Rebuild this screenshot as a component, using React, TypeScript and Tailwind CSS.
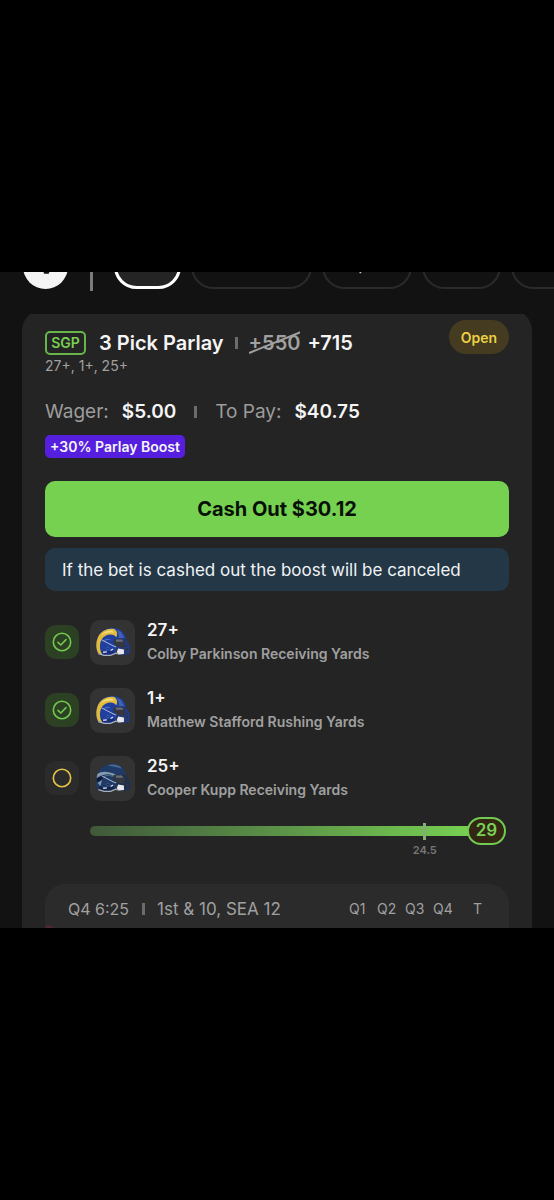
import React from "react";

type Palette = {
  shell: string;
  shade: string;
  stripe: string;
  glow: string;
  mask: string;
};

const RAMS: Palette = { shell: "#203f9f", shade: "#182e78", stripe: "#e3bb3c", glow: "#4870c6", mask: "#213a8c" };
const SEAHAWKS: Palette = { shell: "#1f3a66", shade: "#15264a", stripe: "#8598ae", glow: "#4a6a96", mask: "#1a2f56" };

type Leg = { line: string; market: string; won: boolean; team: "rams" | "seahawks" };

const LEGS: Leg[] = [
  { line: "27+", market: "Colby Parkinson Receiving Yards", won: true, team: "rams" },
  { line: "1+", market: "Matthew Stafford Rushing Yards", won: true, team: "rams" },
  { line: "25+", market: "Cooper Kupp Receiving Yards", won: false, team: "seahawks" },
];

function Helmet({ team }: { team: Leg["team"] }) {
  const c = team === "rams" ? RAMS : SEAHAWKS;
  return (
    <svg viewBox="0 0 104 88" className="h-[30px] w-[36px]" aria-hidden="true">
      <path d="M8 78C0 64 0 38 13 20C27 1 58-2 75 10C85 17 89 26 90 36L65 35L58 45L63 62L60 77L43 84L22 82Z" fill={c.shell} />
      <path d="M13 66C20 76 39 72 52 67L60 77L43 84L26 82L8 77Z" fill={c.shade} />
      {team === "rams" ? (
        <>
          <path d="M56 6C36 2 19 11 10 26C1 42 1 64 9 78L21 80C13 69 11 52 18 38C25 25 41 19 55 24L62 30C66 21 64 11 56 6Z" fill={c.stripe} />
          <path d="M51 11C36 8 24 15 17 25C28 17 41 14 55 17Z" fill="#f3dc80" />
          <path d="M61 8L75 14L85 32L69 32C70 23 67 14 61 8Z" fill="#4062b3" />
        </>
      ) : (
        <>
          <path d="M6 32C19 23 37 24 60 33L54 37C36 31 21 33 4 44Z" fill={c.stripe} />
          <path d="M4 47C20 34 35 36 49 45L30 44L5 56Z" fill="#0d1930" />
          <path d="M37 7C52 2 70 5 79 17L61 12Z" fill={c.glow} />
          <path d="M43 38L52 36L49 42Z" fill="#8abf48" />
          <path d="M7 59L20 50L15 68Z" fill={c.stripe} />
        </>
      )}
      <ellipse cx="36" cy="50" rx="16" ry="17" fill={c.shell} />
      <path d="M23 43C27 33 39 32 46 39C38 37 30 38 23 43Z" fill={c.glow} />
      <circle cx="37" cy="63" r="4" fill={c.shade} stroke={c.glow} strokeWidth="2" />
      <path d="M55 36L81 34L88 48L81 60L62 58L53 47Z" fill="#34373f" />
      <path d="M60 37L79 37L82 43L61 43Z" fill="#686c77" />
      <path d="M19 38L52 55L64 60" fill="none" stroke="#c5cee2" strokeWidth="2.5" />
      <path d="M61 59C75 65 89 62 101 56M64 68L100 72M79 36C94 39 103 57 98 77L72 80M90 42L88 78" fill="none" stroke={c.mask} strokeWidth="4.5" strokeLinejoin="round" />
      <path d="M67 63L84 66L84 79L69 81L63 74Z" fill="#e7e7ec" />
      <path d="M9 78L26 83L45 83L60 77L69 80" fill="none" stroke="#a9b0c2" strokeWidth="3.5" />
      <path d="M23 74L34 73M45 69L52 65" stroke="#d6deee" strokeWidth="4" />
    </svg>
  );
}

function Status({ won }: { won: boolean }) {
  return (
    <div className={`flex size-[34px] shrink-0 items-center justify-center rounded-[11px] ${won ? "bg-[#2c4023]" : "bg-[#2b2b2b]"}`}>
      <svg viewBox="0 0 20 20" className="size-5" fill="none" role="img" aria-label={won ? "Won" : "In progress"}>
        <circle cx="10" cy="10" r="8.7" stroke={won ? "#73c850" : "#e5c644"} strokeWidth="1.6" />
        {won && <path d="M6 10.4L8.8 13L14 7.6" stroke="#73c850" strokeWidth="1.6" strokeLinecap="round" strokeLinejoin="round" />}
      </svg>
    </div>
  );
}

function Divider() {
  return <span className="h-3 w-[3px] shrink-0 bg-[#6c6c6c]" />;
}

const chip = "h-[45px] shrink-0 rounded-full border-2 border-[#2a2a2a] px-5 pb-1 text-[#d0d0d0]";

export default function App() {
  return (
    <div className="min-h-screen bg-black py-[272px] font-['Inter',sans-serif] text-[#f5f5f5]">
      <main className="overflow-hidden bg-[#121212]">
        <nav className="flex h-[42px] items-start overflow-hidden pl-[23px] text-[17px]">
          <div className="-mt-7 flex items-start">
            <button aria-label="Filter" className="flex size-[45px] shrink-0 items-center justify-center rounded-full bg-[#f4f4f4]">
              <svg viewBox="0 0 24 24" className="size-5" fill="none" stroke="#121212" strokeWidth="2" strokeLinecap="round">
                <path d="M3 5h18M6 12h12M10 19h5" />
              </svg>
            </button>
            <span className="mr-[21px] ml-[22px] h-[47px] w-[3px] shrink-0 bg-[#7b7b7b]" />
            <div className="flex gap-[10px]">
              <button className="h-[45px] w-[67px] shrink-0 rounded-full border-[3px] border-white bg-[#242424] pb-1">All</button>
              <button className={`${chip} w-[121px]`}>Cash Out</button>
              <button className={`${chip} w-[90px]`}>Open</button>
              <button className={`${chip} w-[79px]`}>Live</button>
              <button className={`${chip} w-[110px]`}>Settled</button>
            </div>
          </div>
        </nav>

        <div className="overflow-hidden px-[22px]">
          <section className="-mt-[5px] rounded-t-[22px] bg-[#242424] px-[23px] pt-[11px]">
            <header className="flex items-start">
              <div className="flex h-[34px] grow items-center pt-[11px]">
                <span className="flex h-6 w-[41px] items-center justify-center rounded-[5px] border-2 border-[#68b64a] text-[14px] font-semibold text-[#78d152]">SGP</span>
                <h1 className="ml-[13px] text-[20px] leading-6 font-semibold">3 Pick Parlay</h1>
                <span className="mx-[11px] flex"><Divider /></span>
                <s className="relative text-[20px] leading-6 font-semibold text-[#a0a0a0] no-underline">
                  +550
                  <svg viewBox="0 0 50 24" preserveAspectRatio="none" className="absolute inset-0 size-full" aria-hidden="true">
                    <path d="M0 22L50 1" stroke="#a0a0a0" strokeWidth="2" />
                  </svg>
                </s>
                <span className="ml-[7px] text-[20px] leading-6 font-semibold">+715</span>
              </div>
              <span className="flex h-[34px] w-[60px] items-center justify-center rounded-full bg-[#443b20] text-[14px] font-semibold text-[#ecd044]">Open</span>
            </header>
            <p className="mt-1 text-[14px] leading-4 text-[#a0a0a0]">27+, 1+, 25+</p>

            <div className="mt-[26px] flex items-center text-[19px] leading-6">
              <span className="text-[#9c9c9c]">Wager:</span>
              <span className="ml-[13px] font-semibold">$5.00</span>
              <span className="mx-[18px] flex"><Divider /></span>
              <span className="text-[#9c9c9c]">To Pay:</span>
              <span className="ml-[13px] font-semibold">$40.75</span>
            </div>
            <div className="mt-[11px] flex">
              <span className="flex h-[23px] items-center rounded-[5px] bg-[#561fe0] px-[5px] text-[14px] font-semibold">+30% Parlay Boost</span>
            </div>

            <button className="mt-[23px] flex h-14 w-full items-center justify-center rounded-[10px] bg-[#77d151] text-[20px] font-bold text-[#071006]">
              Cash Out $30.12
            </button>
            <p className="mt-[11px] flex min-h-[43px] items-center rounded-[10px] bg-[#243746] px-[17px] pt-[2px] text-[17px] text-[#f0f3f5]">
              If the bet is cashed out the boost will be canceled
            </p>

            <ul className="mt-7 flex flex-col gap-[22px]">
              {LEGS.map((leg) => (
                <li key={leg.market} className="flex h-[46px] items-center">
                  <Status won={leg.won} />
                  <div className="ml-[11px] flex size-[45px] shrink-0 items-center justify-center rounded-[10px] bg-[#333333]">
                    <Helmet team={leg.team} />
                  </div>
                  <div className="ml-3">
                    <h2 className="text-[17px] leading-6 font-semibold">{leg.line}</h2>
                    <p className="text-[14px] leading-6 font-semibold text-[#a0a0a0]">{leg.market}</p>
                  </div>
                </li>
              ))}
            </ul>

            <div className="mt-4 mr-[3px] ml-[45px]">
              <div className="relative flex items-center">
                <div className="h-[10px] grow rounded-l-full bg-linear-to-r from-[#40593a] to-[#77d151]" />
                <span className="absolute left-[80%] h-[17px] w-[3px] bg-[#84ae76]" />
                <span className="-ml-1 flex h-7 w-[39px] items-center justify-center rounded-full border-2 border-[#73ca50] bg-[#332713] text-[17px] font-semibold text-[#7bd057]">29</span>
                <span className="absolute top-[27px] left-[80%] w-8 -translate-x-[14px] text-center text-[11px] leading-3 font-semibold text-[#777777]">24.5</span>
              </div>
            </div>

            <div className="relative mt-[39px] flex h-11 items-start justify-between overflow-hidden rounded-t-[20px] bg-[#2b2b2b] pt-[13px] pr-[27px] pl-[23px] text-[#a0a0a0]">
              <span className="absolute -bottom-3 -left-1 size-4 rounded-full bg-radial from-[#8a2438] to-transparent to-70%" />
              <div className="flex items-center text-[17px] leading-6">
                <span className="text-[16px]">Q4 6:25</span>
                <span className="mr-3 ml-[13px] flex"><Divider /></span>
                <span>1st &amp; 10, SEA 12</span>
              </div>
              <div className="flex text-[14px] leading-6">
                <span className="w-7">Q1</span>
                <span className="w-7">Q2</span>
                <span className="w-7">Q3</span>
                <span className="w-10">Q4</span>
                <span>T</span>
              </div>
            </div>
          </section>
        </div>
      </main>
    </div>
  );
}
